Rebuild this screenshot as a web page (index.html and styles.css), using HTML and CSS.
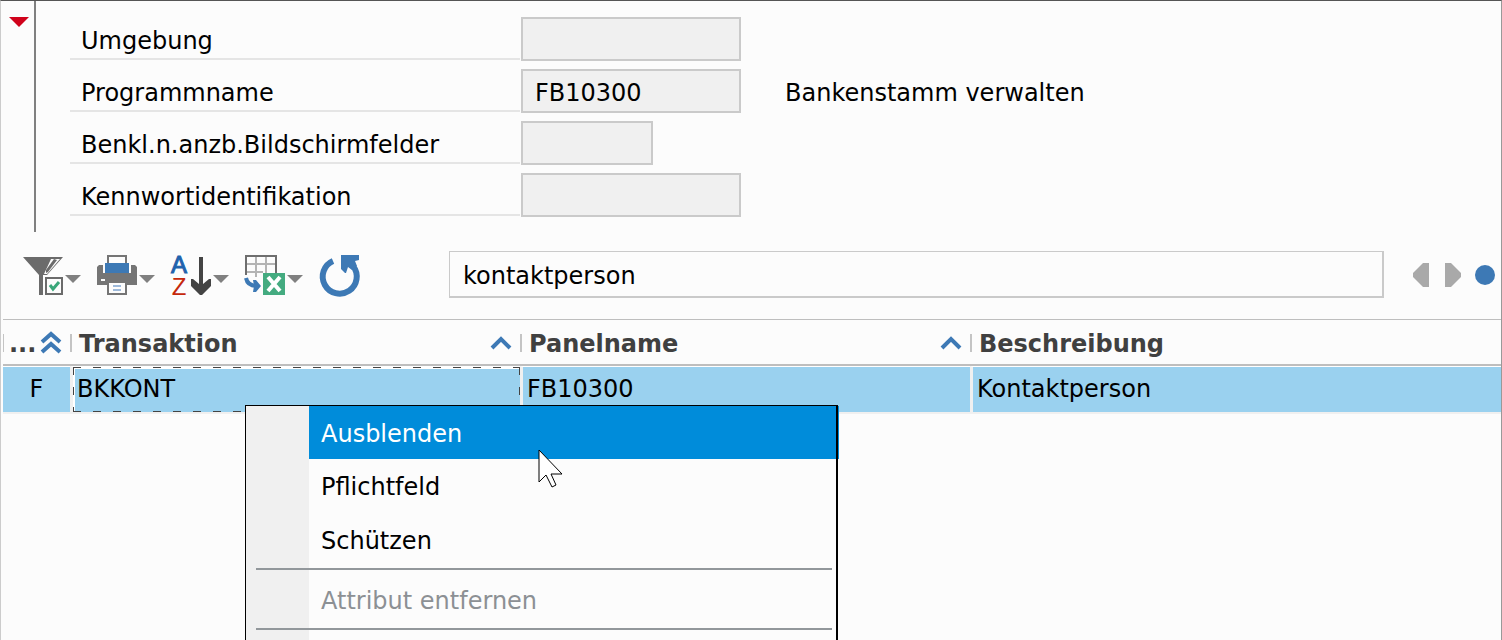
FILE: index.html
```html
<!DOCTYPE html>
<html lang="de">
<head>
<meta charset="UTF-8">
<meta name="viewport" content="width=device-width, initial-scale=1.0">
<title>Bankenstamm verwalten</title>
<link rel="stylesheet" href="styles.css">
</head>
<body>

<div class="window">
  <section class="header">
    <button type="button" class="collapse" aria-label="Bereich einklappen">
      <svg width="20" height="10" viewBox="0 0 20 10"><path d="M0 0H20L10 10Z" fill="#d0021b"/></svg>
    </button>
    <form class="fields">
      <div class="row">
        <label for="umgebung">Umgebung</label>
        <input type="text" id="umgebung" readonly>
      </div>
      <div class="row">
        <label for="programm">Programmname</label>
        <input type="text" id="programm" value="FB10300" readonly>
        <output for="programm">Bankenstamm verwalten</output>
      </div>
      <div class="row">
        <label for="benkl">Benkl.n.anzb.Bildschirmfelder</label>
        <input type="text" id="benkl" class="short" readonly>
      </div>
      <div class="row">
        <label for="kennwort">Kennwortidentifikation</label>
        <input type="text" id="kennwort" readonly>
      </div>
    </form>
  </section>

  <div class="toolbar">
    <div class="tools">
      <button type="button" aria-label="Filter">
        <svg width="42" height="40" viewBox="0 0 42 40">
          <path d="M0 2H40L24 20V40H16V20Z" fill="#6b6b6b"/>
          <path d="M28 4H37L24 19H21Z" fill="#fcfcfc"/>
          <path d="M31 4L34 5L25 17L23 18V15Z" fill="#6b6b6b"/>
          <path d="M20 20H42V40H20Z" fill="#fcfcfc"/>
          <path d="M23 23H39V39H23Z" fill="#fcfcfc" stroke="#6b6b6b" stroke-width="2"/>
          <path d="M27 30L30 34L36 27" fill="none" stroke="#3aa77a" stroke-width="3"/>
        </svg>
        <svg width="16" height="8" viewBox="0 0 16 8"><path d="M0 0H16L8 8Z" fill="#808080"/></svg>
      </button>
      <button type="button" aria-label="Drucken">
        <svg width="42" height="40" viewBox="0 0 42 40">
          <path d="M11 9V1H29V9" fill="none" stroke="#757575" stroke-width="2"/>
          <path d="M2 10H6V18H34V10H38L40 12V30H0V12Z" fill="#757575"/>
          <path d="M8 8H32V18H8Z" fill="#3d79b5"/>
          <path d="M4 24H8V26H4Z" fill="#fcfcfc"/>
          <path d="M11 27H29V39H11Z" fill="#fcfcfc" stroke="#757575" stroke-width="2"/>
          <path d="M16 31H24M16 35H24" stroke="#9db9da" stroke-width="2"/>
        </svg>
        <svg width="16" height="8" viewBox="0 0 16 8"><path d="M0 0H16L8 8Z" fill="#808080"/></svg>
      </button>
      <button type="button" aria-label="Sortieren">
        <svg width="42" height="40" viewBox="0 0 42 40">
          <text x="8" y="18" class="letter letter-a">A</text>
          <text x="8" y="40" class="letter letter-z">Z</text>
          <path d="M28 2H32V29L38 24H40V31L31 40H29L20 31V24H22L28 29Z" fill="#444"/>
        </svg>
        <svg width="16" height="8" viewBox="0 0 16 8"><path d="M0 0H16L8 8Z" fill="#808080"/></svg>
      </button>
      <button type="button" aria-label="Nach Excel exportieren">
        <svg width="42" height="40" viewBox="0 0 42 40">
          <path d="M11 2V22M21 2V18M2 9H30M2 17H18" stroke="#b4b4b4" stroke-width="2"/>
          <path d="M1 20V1H31V18" fill="none" stroke="#6e6e6e" stroke-width="2"/>
          <path d="M1 23C2 28 6 31 12 31" fill="none" stroke="#3d79b5" stroke-width="4"/>
          <path d="M8 25H11L16 31L11 37H8L9 31Z" fill="#3d79b5"/>
          <path d="M18 18H40V40H18Z" fill="#44ab80"/>
          <path d="M23 22L35 36M35 22L23 36" stroke="#fff" stroke-width="4"/>
        </svg>
        <svg width="16" height="8" viewBox="0 0 16 8"><path d="M0 0H16L8 8Z" fill="#808080"/></svg>
      </button>
      <button type="button" aria-label="Aktualisieren">
        <svg width="42" height="40" viewBox="0 0 42 40">
          <path d="M14 6A17 17 0 1 0 34 11" fill="none" stroke="#3d79b5" stroke-width="6"/>
          <path d="M22 0H40V5L36 6L38 11L33 15L29 12L27 18H26L22 14Z" fill="#3d79b5"/>
        </svg>
      </button>
    </div>
    <input type="text" class="search" value="kontaktperson" aria-label="Suche">
    <div class="pager">
      <button type="button" aria-label="Zurück">
        <svg width="16" height="24" viewBox="0 0 16 24"><path d="M16 0H10L0 10V14L10 24H16Z" fill="#a9a9a9"/></svg>
      </button>
      <button type="button" aria-label="Weiter">
        <svg width="16" height="24" viewBox="0 0 16 24"><path d="M0 0H6L16 10V14L6 24H0Z" fill="#a9a9a9"/></svg>
      </button>
      <button type="button" class="dot" aria-label="Status"></button>
    </div>
  </div>

  <table class="grid">
    <colgroup>
      <col class="col-type">
      <col class="col-wide">
      <col class="col-wide">
      <col>
    </colgroup>
    <thead>
      <tr>
        <th class="first"><button type="button"><span>...</span>
          <svg width="20" height="22" viewBox="0 0 20 22"><path d="M1 10L10 2L19 10M1 20L10 12L19 20" fill="none" stroke="#3d79b5" stroke-width="4"/></svg></button></th>
        <th><button type="button"><span>Transaktion</span>
          <svg width="20" height="14" viewBox="0 0 20 14"><path d="M1 12L10 3L19 12" fill="none" stroke="#3d79b5" stroke-width="4"/></svg></button></th>
        <th><button type="button"><span>Panelname</span>
          <svg width="20" height="14" viewBox="0 0 20 14"><path d="M1 12L10 3L19 12" fill="none" stroke="#3d79b5" stroke-width="4"/></svg></button></th>
        <th><button type="button"><span>Beschreibung</span></button></th>
      </tr>
    </thead>
    <tbody>
      <tr>
        <td class="type">F</td>
        <td class="focus">BKKONT</td>
        <td>FB10300</td>
        <td>Kontaktperson</td>
      </tr>
    </tbody>
  </table>

  <div class="menu" role="menu">
    <button type="button" role="menuitem" class="active">Ausblenden</button>
    <button type="button" role="menuitem">Pflichtfeld</button>
    <button type="button" role="menuitem">Schützen</button>
    <hr>
    <button type="button" role="menuitem" disabled>Attribut entfernen</button>
    <hr>
  </div>

  <svg class="cursor" width="26" height="40" viewBox="0 0 26 40">
    <path d="M1 1V33L8 26L14 38L18 36L13 25H24Z" fill="#fff" stroke="#000"/>
  </svg>
</div>

</body>
</html>
```
FILE: styles.css
```css
* {
  box-sizing: border-box;
}
body {
  margin: 0;
  font-family: "DejaVu Sans", Verdana, sans-serif;
  font-size: 24px;
  line-height: 28px;
  color: #000;
}
button, input {
  font: inherit;
  color: inherit;
}
button {
  padding: 0;
  border: none;
  background: none;
}
svg {
  display: block;
  flex: none;
  overflow: visible;
}
.window {
  position: relative;
  height: 100vh;
  overflow: hidden;
  background-color: #fcfcfc;
  border: 1px solid #999;
  border-top-color: #555;
  border-left-color: #ccc;
  border-bottom: none;
}

/* header fields */
.header {
  display: flex;
}
.collapse {
  display: flex;
  width: 35px;
  padding: 16px 0 0 8px;
  border-right: 2px solid #808080;
}
.fields {
  display: flex;
  flex-direction: column;
  gap: 8px;
  padding: 16px 0 15px 34px;
}
.row {
  display: flex;
  align-items: flex-start;
  gap: 1px;
}
.row label {
  width: 450px;
  height: 43px;
  padding: 10px 0 0 11px;
  border-bottom: 2px solid #e5e5e5;
}
.row input {
  width: 220px;
  height: 44px;
  padding: 4px 12px 0;
  border: 2px solid #cacaca;
  background-color: #f0f0f0;
}
.row .short {
  width: 132px;
}
.row output {
  padding: 10px 0 0 43px;
}

/* toolbar */
.toolbar {
  display: flex;
  align-items: center;
  height: 87px;
  padding: 0 6px 2px 22px;
}
.tools {
  display: flex;
  gap: 16px;
}
.tools button {
  display: flex;
  align-items: center;
}
.tools svg + svg {
  margin-top: 8px;
}
.letter {
  font-family: "Liberation Sans", Arial, sans-serif;
  font-size: 24px;
  text-anchor: middle;
}
.letter-a {
  fill: #1f62ad;
  stroke: #1f62ad;
}
.letter-z {
  fill: #c5280c;
}
.search {
  flex: 1;
  min-width: 0;
  height: 47px;
  margin: 0 29px 0 88px;
  padding: 4px 13px 0;
  border: 1px solid #cacaca;
  border-width: 1px 2px 2px 1px;
  background-color: #fcfcfc;
}
.pager {
  display: flex;
  align-items: center;
  gap: 16px;
}
.dot {
  width: 20px;
  height: 20px;
  margin-left: -2px;
  border-radius: 50%;
  background-color: #3d79b5;
}

/* result table */
.grid {
  width: calc(100% - 2px);
  margin-left: 2px;
  table-layout: fixed;
  border-spacing: 0;
  border-top: 1px solid #bebebe;
}
.col-type {
  width: 67px;
}
.col-wide {
  width: 450px;
}
.grid th {
  height: 46px;
  padding: 2px 0 0;
  border-bottom: 2px solid #bebebe;
  color: #404040;
  text-align: left;
}
.grid th button {
  display: flex;
  align-items: center;
  justify-content: space-between;
  width: 100%;
  height: 18px;
  padding: 0 9px 0 7px;
  border-left: 2px solid #c4c4c4;
  font-weight: bold;
}
.grid th span {
  padding-top: 2px;
}
.grid .first button {
  padding: 0 9px 0 5px;
  border-left-width: 1px;
}
.grid td {
  height: 48px;
  padding: 0 5px 2px 4px;
  border-left: 3px solid #f0f0f0;
  border-top: 1px solid #fff;
  border-bottom: 2px solid #f0f0f0;
  background-color: #9ad1ef;
}
.grid .type {
  padding: 0 0 2px;
  border-left: none;
  text-align: center;
}
/* dashed focus frame with a white line inside */
.grid .focus {
  --dash: #444 0 8px, transparent 8px 20px;
  background-image:
    repeating-linear-gradient(90deg, var(--dash)),
    repeating-linear-gradient(90deg, var(--dash)),
    repeating-linear-gradient(180deg, var(--dash)),
    repeating-linear-gradient(180deg, var(--dash)),
    linear-gradient(#fff, #fff),
    linear-gradient(#fff, #fff);
  background-size: 100% 1px, 100% 1px, 1px 100%, 1px 100%, 100% 2px, 2px 100%;
  background-position: top, bottom, left, right, top, left;
  background-repeat: no-repeat;
}

/* context menu */
.menu {
  position: absolute;
  top: 404px;
  bottom: 0;
  left: 244px;
  width: 593px;
  border: 1px solid #000;
  border-right-width: 2px;
  border-bottom: none;
  background: linear-gradient(90deg, #f0f0f0 63px, #fcfcfc 63px);
}
.menu button {
  display: block;
  width: calc(100% - 63px);
  height: 54px;
  margin-left: 63px;
  padding: 2px 12px 0;
  text-align: left;
}
.menu .active {
  height: 53px;
  background-color: #008cda;
  box-shadow: 2px 0 #000, 3px 0 #008cda;
  color: #fff;
}
.menu button:disabled {
  color: #8c9094;
}
.menu hr {
  height: 2px;
  margin: 1px 4px 3px 10px;
  border: none;
  background-color: #92979b;
}
.cursor {
  position: absolute;
  top: 448px;
  left: 537px;
}
```
